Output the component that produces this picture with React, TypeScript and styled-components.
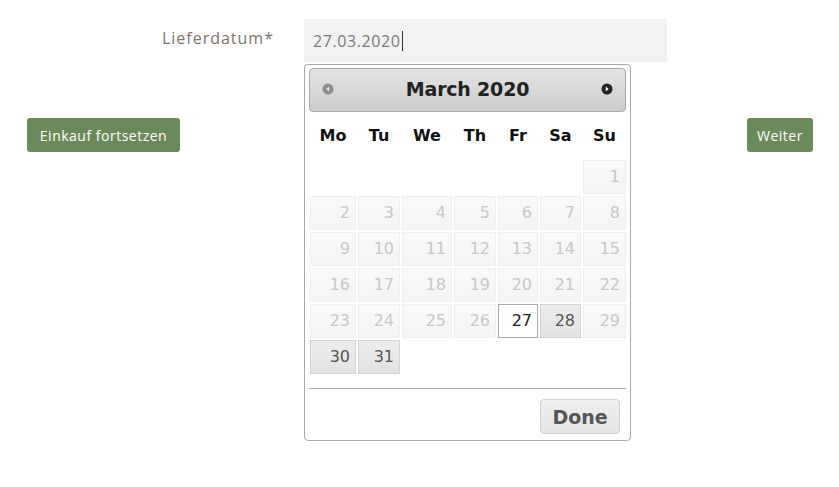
import React from "react";
import styled, { createGlobalStyle, css } from "styled-components";

const Global = createGlobalStyle`
  html, body { margin: 0; padding: 0; background: #fff; }
  body { font-family: "Open Sans", "Liberation Sans", sans-serif; }
  * { box-sizing: border-box; }
`;

const Page = styled.div`
  width: 839px;
  height: 487px;
  padding-top: 19px;
`;

const FieldRow = styled.div`
  display: flex;
  align-items: flex-start;
`;

const Label = styled.label`
  width: 274px;
  text-align: right;
  padding-top: 8px;
  font-family: "Open Sans", "Liberation Sans", sans-serif;
  font-size: 16px;
  letter-spacing: 1px;
  color: #7d746c;
`;

const InputWrap = styled.div`
  position: relative;
  margin-left: 30px;
`;

const Field = styled.div`
  width: 363px;
  height: 43px;
  background: #f2f2f2;
  padding: 10px 9px;
  font-family: "Open Sans", "Liberation Sans", sans-serif;
  font-size: 16px;
  letter-spacing: 0.6px;
  line-height: 22px;
  color: #7a7a7a;
  display: flex;
  align-items: center;
`;

const Caret = styled.span`
  display: inline-block;
  width: 1px;
  height: 20px;
  background: #333;
  margin-left: 1px;
`;

const Picker = styled.div`
  position: absolute;
  top: 45px;
  left: 0;
  width: 327px;
  background: #fff;
  border: 1px solid #aaa;
  border-radius: 4px;
  padding: 3px 4px 6px 4px;
  font-family: "DejaVu Sans", Verdana, sans-serif;
  z-index: 10;
`;

const Header = styled.div`
  height: 44px;
  border: 1px solid #aaa;
  border-radius: 4px;
  background: linear-gradient(#e4e4e4, #cccccc);
  display: flex;
  align-items: center;
  justify-content: space-between;
  padding: 0 12px 2px 12px;
`;

const Title = styled.div`
  font-weight: bold;
  font-size: 19px;
  color: #222;
  letter-spacing: -0.2px;
`;

const NavIcon = styled.svg<{ $disabled?: boolean }>`
  width: 12px;
  height: 12px;
  display: block;
  ${(p) =>
    p.$disabled &&
    css`
      opacity: 0.4;
    `}
`;

const Grid = styled.div`
  display: grid;
  grid-template-columns: 46px 42px 50px 42px 40px 41px 43px;
  column-gap: 2px;
  row-gap: 2px;
  padding-left: 1px;
`;

const DayName = styled.div`
  height: 46px;
  display: flex;
  align-items: center;
  justify-content: center;
  font-weight: bold;
  font-size: 16px;
  color: #111;
`;

type CellKind = "disabled" | "default" | "active" | "empty";

const Cell = styled.div<{ $kind: CellKind }>`
  height: 34px;
  text-align: right;
  padding: 0 5px 0 0;
  font-size: 16px;
  line-height: 32px;
  border: 1px solid transparent;
  ${(p) =>
    p.$kind === "disabled" &&
    css`
      border-color: #f0f0f0;
      background: linear-gradient(#fafafa 0%, #f7f7f7 50%, #f5f5f5 100%);
      color: #c8c8c8;
    `}
  ${(p) =>
    p.$kind === "default" &&
    css`
      border-color: #d3d3d3;
      background: linear-gradient(#ececec 0%, #e8e8e8 50%, #e2e2e2 100%);
      color: #555;
    `}
  ${(p) =>
    p.$kind === "active" &&
    css`
      border-color: #aaa;
      background: #fff;
      color: #212121;
    `}
`;

const ButtonPane = styled.div`
  margin-top: 14px;
  border-top: 1px solid #aaa;
  display: flex;
  justify-content: flex-end;
  padding: 10px 6px 0 0;
`;

const DoneButton = styled.button`
  width: 80px;
  height: 35px;
  border: 1px solid #d3d3d3;
  border-radius: 4px;
  background: linear-gradient(#f0f0f0, #e3e3e3);
  font-family: "DejaVu Sans", Verdana, sans-serif;
  font-weight: bold;
  font-size: 19px;
  color: #555;
  padding: 0;
  cursor: pointer;
`;

const Actions = styled.div`
  display: flex;
  justify-content: space-between;
  margin-top: 56px;
  padding: 0 26px 0 27px;
`;

const GreenButton = styled.button<{ $w: number }>`
  width: ${(p) => p.$w}px;
  height: 34px;
  border: none;
  border-radius: 3px;
  background: #6b8a5a;
  color: #fff;
  font-family: "Open Sans", "Liberation Sans", sans-serif;
  font-size: 14px;
  letter-spacing: 0.5px;
  padding: 0;
  cursor: pointer;
`;

const days = ["Mo", "Tu", "We", "Th", "Fr", "Sa", "Su"];

function cellsFor() {
  const cells: { n?: number; kind: CellKind }[] = [];
  for (let i = 0; i < 6; i++) cells.push({ kind: "empty" });
  for (let d = 1; d <= 31; d++) {
    let kind: CellKind = "disabled";
    if (d === 27) kind = "active";
    else if (d === 28 || d === 30 || d === 31) kind = "default";
    cells.push({ n: d, kind });
  }
  return cells;
}

export default function App() {
  const cells = cellsFor();
  return (
    <Page>
      <Global />
      <FieldRow>
        <Label>Lieferdatum*</Label>
        <InputWrap>
          <Field>
            27.03.2020
            <Caret />
          </Field>
          <Picker>
            <Header>
              <NavIcon viewBox="0 0 12 12" $disabled>
                <circle cx="6" cy="6" r="5.5" fill="#222" />
                <path d="M7.2 3.4 L4.4 6 L7.2 8.6 Z" fill="#fff" />
              </NavIcon>
              <Title>March 2020</Title>
              <NavIcon viewBox="0 0 12 12">
                <circle cx="6" cy="6" r="5.5" fill="#222" />
                <path d="M4.8 3.4 L7.6 6 L4.8 8.6 Z" fill="#fff" />
              </NavIcon>
            </Header>
            <Grid>
              {days.map((d) => (
                <DayName key={d}>{d}</DayName>
              ))}
              {cells.map((c, i) => (
                <Cell key={i} $kind={c.kind}>
                  {c.n ?? ""}
                </Cell>
              ))}
            </Grid>
            <ButtonPane>
              <DoneButton>Done</DoneButton>
            </ButtonPane>
          </Picker>
        </InputWrap>
      </FieldRow>
      <Actions>
        <GreenButton $w={153}>Einkauf fortsetzen</GreenButton>
        <GreenButton $w={66}>Weiter</GreenButton>
      </Actions>
    </Page>
  );
}
